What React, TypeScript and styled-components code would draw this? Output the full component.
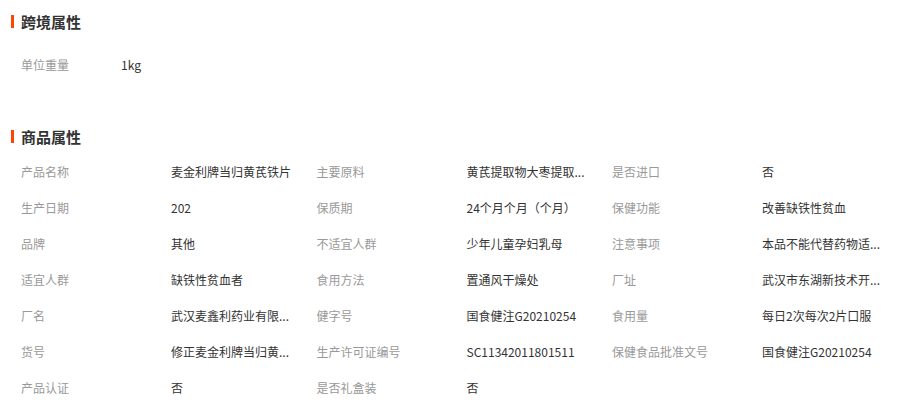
import styled, { createGlobalStyle } from 'styled-components';

const GlobalStyle = createGlobalStyle`
  html, body {
    margin: 0;
    padding: 0;
    background: #fff;
  }
  body {
    font-family: "Noto Sans CJK SC", "Liberation Sans", sans-serif;
    font-size: 12px;
    color: #333;
  }
`;

const Page = styled.div`
  width: 897px;
  height: 409px;
  overflow: hidden;
  padding-top: 12px;
  box-sizing: border-box;
`;

const Section = styled.section<{ $gap?: number }>`
  margin-top: ${(p) => p.$gap ?? 0}px;
`;

const Title = styled.h3`
  position: relative;
  margin: 0;
  padding-left: 21px;
  height: 20px;
  line-height: 20px;
  font-size: 15px;
  font-weight: bold;
  color: #333;

  &::before {
    content: '';
    position: absolute;
    left: 11px;
    top: 3px;
    width: 3px;
    height: 13px;
    background: #ff4400;
  }
`;

const Grid = styled.div<{ $top: number; $cols: string }>`
  display: grid;
  grid-template-columns: ${(p) => p.$cols};
  padding: ${(p) => p.$top}px 0 0 21px;
`;

const Cell = styled.div<{ $label?: boolean }>`
  height: 36px;
  line-height: 36px;
  color: ${(p) => (p.$label ? '#999' : '#333')};
  white-space: nowrap;
`;

type Attr = [string, string];

const crossBorder: Attr[] = [['单位重量', '1kg']];

const goods: Attr[] = [
  ['产品名称', '麦金利牌当归黄芪铁片'],
  ['主要原料', '黄芪提取物大枣提取...'],
  ['是否进口', '否'],
  ['生产日期', '202'],
  ['保质期', '24个月个月（个月）'],
  ['保健功能', '改善缺铁性贫血'],
  ['品牌', '其他'],
  ['不适宜人群', '少年儿童孕妇乳母'],
  ['注意事项', '本品不能代替药物适...'],
  ['适宜人群', '缺铁性贫血者'],
  ['食用方法', '置通风干燥处'],
  ['厂址', '武汉市东湖新技术开...'],
  ['厂名', '武汉麦鑫利药业有限...'],
  ['健字号', '国食健注G20210254'],
  ['食用量', '每日2次每次2片口服'],
  ['货号', '修正麦金利牌当归黄...'],
  ['生产许可证编号', 'SC11342011801511'],
  ['保健食品批准文号', '国食健注G20210254'],
  ['产品认证', '否'],
  ['是否礼盒装', '否'],
];

const renderCells = (items: Attr[]) =>
  items.flatMap(([k, v]) => [
    <Cell key={k + '-k'} $label>{k}</Cell>,
    <Cell key={k + '-v'}>{v}</Cell>,
  ]);

export default function App() {
  return (
    <>
      <GlobalStyle />
      <Page>
        <Section>
          <Title>跨境属性</Title>
          <Grid $top={15} $cols="100px 200px">
            {renderCells(crossBorder)}
          </Grid>
        </Section>
        <Section $gap={44}>
          <Title>商品属性</Title>
          <Grid $top={7} $cols="150px 145.5px 150px 145.5px 150px 1fr">
            {renderCells(goods)}
          </Grid>
        </Section>
      </Page>
    </>
  );
}
